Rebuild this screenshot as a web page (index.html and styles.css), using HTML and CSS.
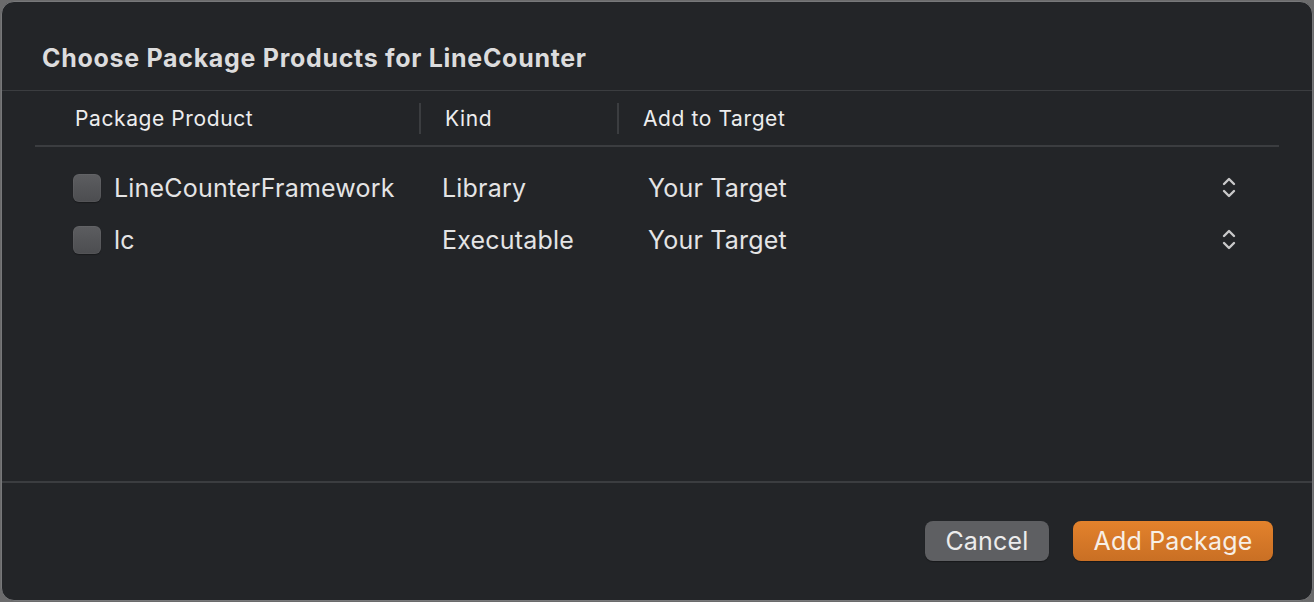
FILE: index.html
```html
<!DOCTYPE html>
<html lang="en">
<head>
<meta charset="utf-8">
<title>Choose Package Products</title>
<link rel="stylesheet" href="styles.css">
</head>
<body>
<div class="dialog">
  <div class="title-bar">
    <h1 class="title">Choose Package Products for LineCounter</h1>
  </div>
  <div class="table">
    <div class="thead">
      <div class="th th-product">Package Product</div>
      <div class="th th-kind">Kind</div>
      <div class="th th-target">Add to Target</div>
    </div>
    <div class="tbody">
      <div class="row">
        <div class="cell cell-product"><span class="checkbox"></span><span class="name">LineCounterFramework</span></div>
        <div class="cell cell-kind">Library</div>
        <div class="cell cell-target"><span class="target">Your Target</span>
          <svg class="stepper" width="16" height="26" viewBox="0 0 16 26"><path d="M3 9 L8 4 L13 9 M3 16 L8 21 L13 16" fill="none" stroke="#c9c9ca" stroke-width="2.4" stroke-linecap="round" stroke-linejoin="round"/></svg>
        </div>
      </div>
      <div class="row">
        <div class="cell cell-product"><span class="checkbox"></span><span class="name">lc</span></div>
        <div class="cell cell-kind">Executable</div>
        <div class="cell cell-target"><span class="target">Your Target</span>
          <svg class="stepper" width="16" height="26" viewBox="0 0 16 26"><path d="M3 9 L8 4 L13 9 M3 16 L8 21 L13 16" fill="none" stroke="#c9c9ca" stroke-width="2.4" stroke-linecap="round" stroke-linejoin="round"/></svg>
        </div>
      </div>
    </div>
  </div>
  <div class="footer">
    <button class="btn btn-cancel">Cancel</button>
    <button class="btn btn-primary">Add Package</button>
  </div>
</div>
</body>
</html>
```
FILE: styles.css
```css
* { box-sizing: border-box; }
html, body { margin: 0; padding: 0; }
body {
  background: #6b6b6c;
  width: 1314px;
  height: 602px;
  overflow: hidden;
  font-family: Inter, "Liberation Sans", sans-serif;
  color: #e2e2e3;
}
.dialog {
  margin: 1px;
  width: 1312px;
  height: 600px;
  border: 1px solid #77787a;
  border-radius: 13px;
  background: #232528;
  display: flex;
  flex-direction: column;
  overflow: hidden;
}
.title-bar {
  height: 89px;
  border-bottom: 1px solid #3b3d40;
  padding: 41px 0 0 40px;
  flex: none;
}
.title {
  margin: 0;
  font-size: 25px;
  line-height: 30px;
  font-weight: 700;
  color: #dcdcdd;
  letter-spacing: 0.7px;
}
.table {
  flex: 1;
  margin: 0 33px 0 33px;
}
.thead {
  display: grid;
  grid-template-columns: 385px 198px 1fr;
  height: 56px;
  padding-top: 1px;
  border-bottom: 2px solid #3b3d40;
  align-items: center;
  font-size: 21px;
  letter-spacing: 0.6px;
  color: #ededee;
}
.th { line-height: 31px; height: 31px; }
.th-product { padding-left: 40px; }
.th-kind, .th-target { border-left: 2px solid #3b3d40; padding-left: 24px; }
.th-kind { margin-left: -1px; }
.th-target { padding-left: 24px; margin-left: -1px; }
.tbody { padding-top: 15px; }
.row {
  display: grid;
  grid-template-columns: 385px 198px 1fr;
  height: 52px;
  align-items: center;
  font-size: 25px;
  letter-spacing: 0.2px;
  color: #e4e4e5;
}
.cell-product { display: flex; align-items: center; padding-left: 38px; }
.checkbox {
  width: 28px;
  height: 28px;
  border-radius: 6px;
  background: linear-gradient(#5c5d60, #4c4d50);
  box-shadow: inset 0 0 0 1px rgba(255,255,255,0.04), 0 1px 1px rgba(0,0,0,0.3);
  margin-right: 13px;
  flex: none;
}
.cell-kind { padding-left: 22px; }
.cell-target { display: flex; align-items: center; padding-left: 30px; padding-right: 42px; }
.target { flex: 1; }
.stepper { display: block; }
.footer {
  flex: none;
  height: 119px;
  border-top: 2px solid #3b3d40;
  display: flex;
  justify-content: flex-end;
  align-items: flex-start;
  gap: 24px;
  padding: 38px 39px 0 0;
}
.btn {
  height: 40px;
  border: none;
  border-radius: 8px;
  font-family: Inter, "Liberation Sans", sans-serif;
  font-size: 25px;
  letter-spacing: 0.2px;
  color: #ececec;
  padding: 0;
}
.btn-cancel {
  width: 124px;
  background: #5e5f62;
  box-shadow: 0 1px 1px rgba(0,0,0,0.35);
}
.btn-primary {
  width: 200px;
  background: linear-gradient(#e3822c, #c96f24);
  color: #f7efe6;
  box-shadow: 0 1px 1px rgba(0,0,0,0.35);
}
```
